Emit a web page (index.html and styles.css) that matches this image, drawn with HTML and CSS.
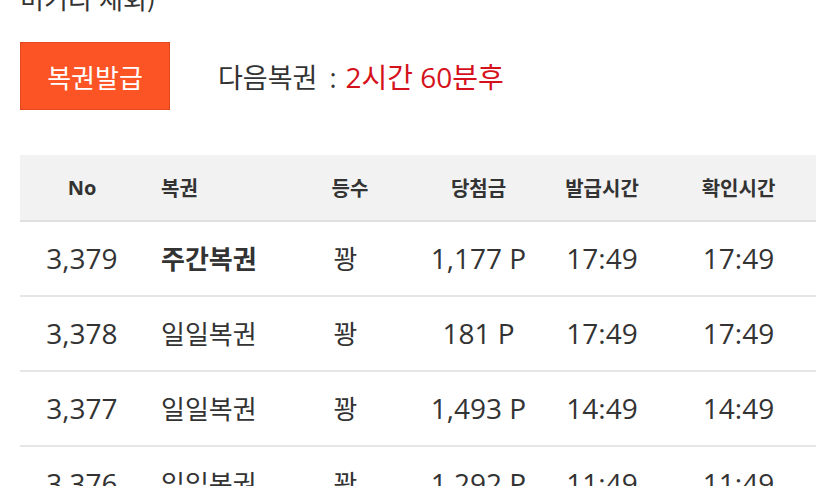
FILE: index.html
```html
<!DOCTYPE html>
<html lang="ko">
<head>
<meta charset="utf-8">
<link rel="stylesheet" href="styles.css">
</head>
<body>
<div class="page">
  <p class="note">미기리 재회)</p>
  <div class="issue-row">
    <button class="issue-btn">복권발급</button>
    <div class="next">다음복권<span class="colon">:</span><span class="next-time">2시간 60분후</span></div>
  </div>
  <table class="lotto">
    <colgroup>
      <col class="c-no"><col class="c-name"><col class="c-rank"><col class="c-prize"><col class="c-issue"><col class="c-check">
    </colgroup>
    <thead>
      <tr><th class="latin">No</th><th class="left">복권</th><th>등수</th><th>당첨금</th><th>발급시간</th><th>확인시간</th></tr>
    </thead>
    <tbody>
      <tr><td>3,379</td><td class="left ko strong">주간복권</td><td class="ko rank">꽝</td><td>1,177 P</td><td>17:49</td><td>17:49</td></tr>
      <tr><td>3,378</td><td class="left ko">일일복권</td><td class="ko rank">꽝</td><td>181 P</td><td>17:49</td><td>17:49</td></tr>
      <tr><td>3,377</td><td class="left ko">일일복권</td><td class="ko rank">꽝</td><td>1,493 P</td><td>14:49</td><td>14:49</td></tr>
      <tr><td>3,376</td><td class="left ko">일일복권</td><td class="ko rank">꽝</td><td>1,292 P</td><td>11:49</td><td>11:49</td></tr>
    </tbody>
  </table>
</div>
</body>
</html>
```

FILE: styles.css
```css
html, body {
  margin: 0;
  padding: 0;
  background: #fff;
  overflow: hidden;
}
body {
  font-family: "Open Sans", "Noto Sans CJK KR", sans-serif;
  color: #333;
}
.page {
  padding: 0 20px;
}
.note {
  margin: -19px 0 0;
  font-family: "Noto Sans CJK KR", sans-serif;
  font-size: 26px;
  line-height: 34px;
  color: #333;
}
.issue-row {
  display: flex;
  align-items: center;
  gap: 48px;
  margin-top: 27px;
}
.issue-btn {
  width: 150px;
  height: 68px;
  background: #fd5426;
  border: 1px solid #e2461c;
  color: #fff;
  font-family: "Noto Sans CJK KR", sans-serif;
  font-size: 26px;
  padding: 0;
  margin: 0;
}
.next {
  font-family: "Open Sans", "Noto Sans CJK KR", sans-serif;
  font-size: 27px;
  color: #333;
  white-space: nowrap;
}
.colon {
  margin: 0 9px 0 12px;
}
.next-time {
  color: #d5121c;
  font-size: 28px;
}
.lotto {
  margin-top: 45px;
  width: 796px;
  border-collapse: collapse;
  table-layout: fixed;
}
.c-no { width: 124px; }
.c-name { width: 142px; }
.c-rank { width: 128px; }
.c-prize { width: 129px; }
.c-issue { width: 118px; }
.c-check { width: 155px; }
.lotto th {
  background: #f2f2f2;
  height: 65px;
  padding: 0;
  font-family: "Noto Sans CJK KR", sans-serif;
  font-size: 20px;
  font-weight: 700;
  color: #333;
  text-align: center;
  border-bottom: 2px solid #e0e0e0;
}
.lotto th.latin {
  font-family: "Open Sans", sans-serif;
  font-size: 20px;
}
.lotto td {
  height: 71px;
  padding: 0 0 2px;
  font-family: "Open Sans", "Noto Sans CJK KR", sans-serif;
  font-size: 28px;
  color: #333;
  text-align: center;
  border-bottom: 2px solid #e6e6e6;
}
.lotto td.ko {
  font-family: "Noto Sans CJK KR", sans-serif;
  font-size: 26px;
}
.lotto td.rank {
  padding-right: 9px;
}
.lotto .left {
  text-align: left;
  padding-left: 17px;
}
.lotto .strong {
  font-weight: 700;
}
```
